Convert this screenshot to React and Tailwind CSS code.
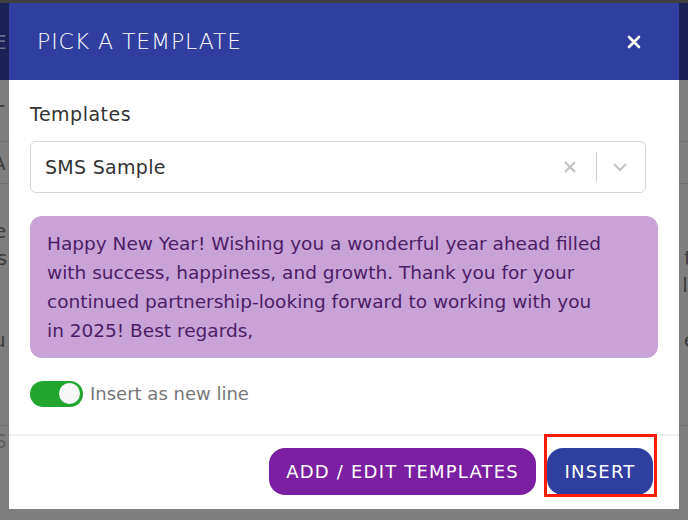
import React from "react";

export default function App() {
  return (
    <div className="relative w-[688px] h-[520px] overflow-hidden bg-[#7f7f7f] font-['DejaVu_Sans',sans-serif]">
      {/* underlying page (dimmed) */}
      <div className="h-[3px] bg-[#3f3f3f]" />
      <div className="h-[77px] bg-[#1b2157] flex items-center text-[20px] text-[#6b6f8f]">
        <span className="-ml-[6px]">E</span>
      </div>
      <div className="flex flex-col text-[20px] text-[#3c3c3c]">
        <div className="h-[62px] border-b border-[#707070] flex items-center">
          <span className="-ml-[8px] pt-[2px]">T</span>
        </div>
        <div className="h-[42px] border-b border-[#707070] flex items-center">
          <span className="-ml-[8px]">A</span>
        </div>
        <div className="h-[242px] border-b border-[#707070] flex flex-col pt-[34px] leading-[27px]">
          <div className="flex justify-between"><span className="-ml-[6px]">e</span><span /></div>
          <div className="flex justify-between"><span className="-ml-[11px]">ts</span><span className="-mr-[4px]">t</span></div>
          <div className="flex justify-between"><span /><span className="-mr-[12px]">le</span></div>
          <div className="flex justify-between mt-[28px]"><span className="-ml-[7px]">u</span><span className="-mr-[8px]">e</span></div>
        </div>
        <div className="h-[30px] flex items-center">
          <span className="-ml-[6px] text-[#5e5e5e]">S</span>
        </div>
      </div>

      {/* modal */}
      <div className="absolute left-[9px] top-[3px] w-[670px] h-[506px] bg-white flex flex-col">
        <div className="h-[77px] bg-[#303f9f] flex items-center justify-between pl-[28px] pr-[38px]">
          <span className="text-white text-[22px] font-extralight tracking-[0.9px]">PICK A TEMPLATE</span>
          <svg width="14" height="14" viewBox="0 0 14 14" className="text-white">
            <path d="M2 2 L12 12 M12 2 L2 12" stroke="currentColor" strokeWidth="2.6" strokeLinecap="round" />
          </svg>
        </div>

        <div className="flex flex-col px-[21px] pt-[22px]">
          <div className="text-[19px] text-[#333] leading-[24px] tracking-[0.5px]">Templates</div>
          <div className="mt-[15px] mr-[12px] h-[52px] border border-[#d6d6d6] rounded-[6px] flex items-center pl-[14px] pr-[16px]">
            <span className="flex-1 text-[19px] text-[#333] tracking-[0.3px]">SMS Sample</span>
            <svg width="14" height="14" viewBox="0 0 14 14" className="text-[#c4c4c4]">
              <path d="M2 2 L12 12 M12 2 L2 12" stroke="currentColor" strokeWidth="2.4" />
            </svg>
            <div className="w-px h-[30px] bg-[#cfcfcf] ml-[19px] mr-[14px]" />
            <svg width="18" height="12" viewBox="0 0 18 12" className="text-[#c4c4c4]">
              <path d="M3 3 L9 9 L15 3" stroke="currentColor" strokeWidth="2" fill="none" />
            </svg>
          </div>

          <div className="mt-[23px] bg-[#c9a3d8] rounded-[12px] pl-[17px] pr-[12px] pt-[13px] pb-[13px] text-[18.5px] leading-[29px] text-[#4e1b66]">
            Happy New Year! Wishing you a wonderful year ahead filled
            <br />
            with success, happiness, and growth. Thank you for your
            <br />
            continued partnership-looking forward to working with you
            <br />
            in 2025! Best regards,
          </div>

          <div className="mt-[22px] flex items-center gap-[7px]">
            <div className="w-[53px] h-[26px] rounded-full bg-[#21a52f] flex items-center justify-end pr-[3px]">
              <div className="w-[21px] h-[21px] rounded-full bg-[#f7f7f7]" />
            </div>
            <span className="text-[18px] text-[#777]">Insert as new line</span>
          </div>
        </div>

        <div className="mt-auto h-[75px] border-t-2 border-[#f1f1f1] flex items-start justify-end pr-[26px] pt-[12px] gap-[11px]">
          <button className="h-[47px] px-[17px] rounded-[16px] bg-[#7b1fa2] text-white text-[18px] tracking-[1.2px]">ADD / EDIT TEMPLATES</button>
          <div className="relative">
            <button className="h-[47px] w-[106px] rounded-[16px] bg-[#303f9f] text-white text-[18px] tracking-[1.2px]">INSERT</button>
            <div className="absolute -left-[3px] -top-[14px] w-[113px] h-[63px] border-[3px] border-[#ff1a00]" />
          </div>
        </div>
      </div>
    </div>
  );
}
